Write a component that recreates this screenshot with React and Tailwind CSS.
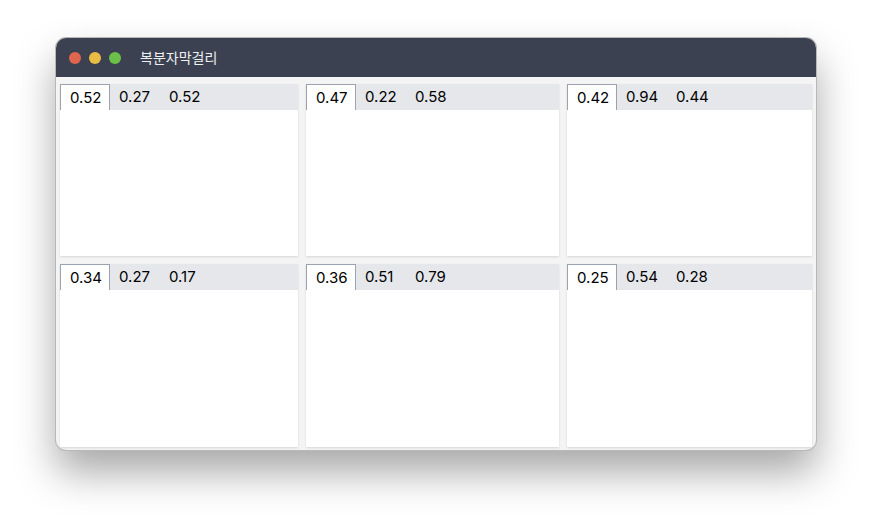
import React from "react";

const panels = [
  ["0.52", "0.27", "0.52"],
  ["0.47", "0.22", "0.58"],
  ["0.42", "0.94", "0.44"],
  ["0.34", "0.27", "0.17"],
  ["0.36", "0.51", "0.79"],
  ["0.25", "0.54", "0.28"],
];

const Panel = ({ tabs }) => {
  return (
    <div className="bg-white shadow-[0_1px_2px_rgba(0,0,0,0.12)] flex flex-col">
      <div className="flex bg-[#e5e7eb] h-[26px]">
        {tabs.map((t, i) => (
          <div
            key={i}
            className={
              i === 0
                ? "w-[50px] pl-[9px] bg-white border border-b-0 border-[#9ca3af] text-[15px] leading-[25px] text-black"
                : "w-[50px] pl-[9px] text-[15px] leading-[26px] text-black"
            }
          >
            {t}
          </div>
        ))}
      </div>
    </div>
  );
};

const App = () => {
  return (
    <div className="w-[872px] h-[525px] bg-white pl-[56px] pt-[38px] font-['Inter','Noto_Sans_CJK_KR',sans-serif]">
      <div className="w-[760px] h-[412px] rounded-[10px] overflow-hidden ring-1 ring-[#b8b8b8] shadow-[0_22px_40px_rgba(0,0,0,0.35)] flex flex-col bg-[#f4f4f5]">
        <div className="h-[39px] bg-[#3b4150] flex items-center pl-[13px] shrink-0">
          <div className="flex gap-[8px]">
            <span className="w-[12px] h-[12px] rounded-full bg-[#e0654f]" />
            <span className="w-[12px] h-[12px] rounded-full bg-[#e9bd43]" />
            <span className="w-[12px] h-[12px] rounded-full bg-[#6cc04a]" />
          </div>
          <span className="ml-[19px] text-[14px] text-[#eef0f3]">복분자막걸리</span>
        </div>
        <div className="flex-1 grid grid-cols-[238px_253px_245px] grid-rows-[172px_183px] gap-[8px] pl-[4px] pt-[7px]">
          {panels.map((p, i) => (
            <Panel key={i} tabs={p} />
          ))}
        </div>
      </div>
    </div>
  );
};

export default App;
